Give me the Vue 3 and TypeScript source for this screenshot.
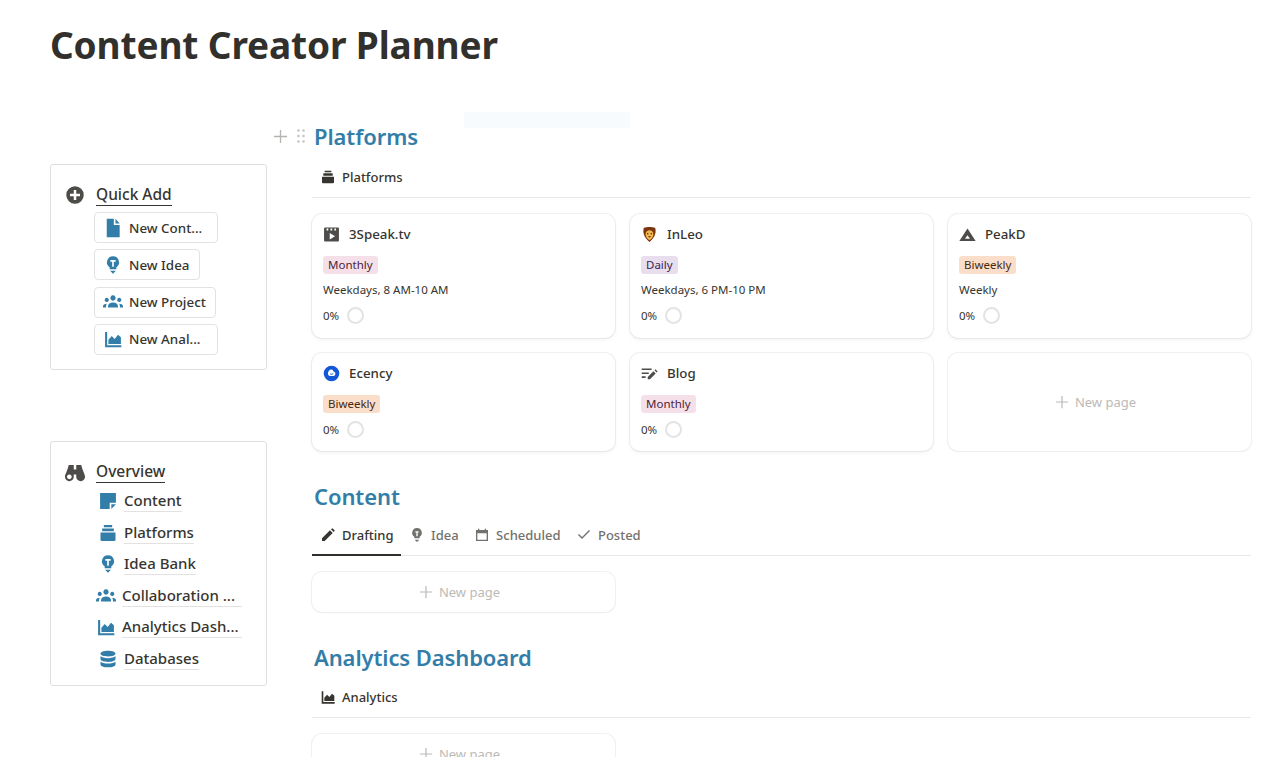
<script setup lang="ts">
const icons: Record<string, string> = {
  plus: 'M12 1.500a10.500 10.500 0 1 0 0 21a10.500 10.500 0 1 0 0-21zM10.500 6h3v4.500h4.500v3h-4.500v4.500h-3v-4.500h-4.500v-3h4.500z',
  file: 'M4.500 1h8.500v7.500h7V23H4.500zM15 1l5 5.500h-5z',
  bulb: 'M12 1.500a7.200 7.200 0 0 0-4 13.200V17h8v-2.300a7.200 7.200 0 0 0-4-13.200zM8.800 6h6.400v2h-2.200v6h-2V8H8.800zM8.500 19h7L12 22.500z',
  groups: 'M12 4a3.200 3.200 0 1 0 .01 0zM4.500 7a2.500 2.500 0 1 0 .01 0zM19.500 7a2.500 2.500 0 1 0 .01 0zM6 18.500V17c0-2.500 2.500-4.500 6-4.500s6 2 6 4.500v1.500zM0 18.500V17c0-1.700 1.700-3 4.500-3-.5 1-.8 2-.8 3v1.500zM24 18.500V17c0-1.700-1.700-3-4.500-3 .5 1 .8 2 .8 3v1.500z',
  chart: 'M2.500 3.500H5v16h17v2.500H2.500zM6.500 18v-5l4-4.500 3.500 3.500 4-5 3.500 3v8z',
  binoculars: 'M4.500 3.500h6V18a5.200 5.200 0 1 1-10.500-.5c0-3 2.500-6 4.500-14zM5.200 15a2.800 2.800 0 1 0 .01 0zM19.500 3.500h-6V18a5.200 5.200 0 1 0 10.500-.5c0-3-2.500-6-4.500-14zM18.800 15a2.800 2.800 0 1 0 .01 0zM10.500 9h3v6h-3z',
  note: 'M2.500 2.500h19V14H14v7.500H2.500zM16 16h5.500L16 21.500z',
  stack: 'M7 2.500h10v2.500H7zM5 6.500h14V10H5zM3 11.500h18V20a1.500 1.500 0 0 1-1.500 1.500h-15A1.500 1.500 0 0 1 3 20z',
  database: 'M12 2c5 0 9 1.300 9 3.500S17 9 12 9 3 7.700 3 5.500 7 2 12 2zM3 8.500c1.500 1.700 5 2.500 9 2.500s7.500-.8 9-2.500V12c0 2-4 3.500-9 3.500S3 14 3 12zM3 15c1.500 1.700 5 2.500 9 2.500s7.500-.8 9-2.500v3.500c0 2-4 3.500-9 3.500s-9-1.500-9-3.500z',
  video: 'M3 2h18a1.500 1.500 0 0 1 1.500 1.500v17a1.500 1.500 0 0 1-1.500 1.500H3a1.500 1.500 0 0 1-1.500-1.500v-17A1.500 1.500 0 0 1 3 2zM5 3.500v3h2.500v-3zM10.500 3.500v3H13v-3zM16 3.500v3h2.500v-3zM9.500 10v9l7.500-4.500z',
  peak: 'M12 3.500L23.500 21H.5zM12 13l-3.500 5h7z',
  blog: 'M1 5h14v2.200H1zM1 10.500h10v2.200H1zM1 16h5.500v2.200H1zM9.500 20v-3.200l8-8 3.200 3.200-8 8zM19 7.500l1.500-1.500 3 3-1.500 1.500z',
  pencil: 'M3 21v-4L15 5l4 4L7 21zM16.500 3.500l1-1a1.400 1.400 0 0 1 2 0l2 2a1.400 1.400 0 0 1 0 2l-1 1z',
  calendar: 'M3 4.500h3V2.500h2v2h8v-2h2v2h3V21H3zM5 9.500V19h14V9.500z',
  check: 'M9 18L3 12l1.500-1.500L9 15 19.500 4.500 21 6z',
  bulbGrey: 'M12 1.500a7.200 7.200 0 0 0-4 13.200V17h8v-2.300a7.200 7.200 0 0 0-4-13.200zM9.500 6.500h5v1.800h-1.500V14h-2V8.300H9.500zM8.500 19h7L12 22.500z',
}

const quick = [
  { icon: 'file', label: 'New Cont...', w: 124 },
  { icon: 'bulb', label: 'New Idea', w: 106 },
  { icon: 'groups', label: 'New Project', w: 122 },
  { icon: 'chart', label: 'New Anal...', w: 124 },
]
const links = [
  { icon: 'note', label: 'Content', wide: false },
  { icon: 'stack', label: 'Platforms', wide: false },
  { icon: 'bulb', label: 'Idea Bank', wide: false },
  { icon: 'groups', label: 'Collaboration ...', wide: true },
  { icon: 'chart', label: 'Analytics Dash...', wide: true },
  { icon: 'database', label: 'Databases', wide: false },
]
const platformCards = [
  { icon: 'video', name: '3Speak.tv', tag: 'Monthly', cls: 'pink', note: 'Weekdays, 8 AM-10 AM' },
  { icon: 'lion', name: 'InLeo', tag: 'Daily', cls: 'purple', note: 'Weekdays, 6 PM-10 PM' },
  { icon: 'peak', name: 'PeakD', tag: 'Biweekly', cls: 'orange', note: 'Weekly' },
  { icon: 'ecency', name: 'Ecency', tag: 'Biweekly', cls: 'orange', note: '' },
  { icon: 'blog', name: 'Blog', tag: 'Monthly', cls: 'pink', note: '' },
]
const tabs = [
  { icon: 'pencil', label: 'Drafting', active: true },
  { icon: 'bulbGrey', label: 'Idea', active: false },
  { icon: 'calendar', label: 'Scheduled', active: false },
  { icon: 'check', label: 'Posted', active: false },
]
</script>

<template>
  <div class="page">
    <h1 class="title">Content Creator Planner</h1>
    <div class="columns">
      <aside class="side">
        <section class="box quick">
          <div class="box-head">
            <svg class="head-icon" viewBox="0 0 24 24"><path :d="icons.plus" /></svg>
            <span class="head-link">Quick Add</span>
          </div>
          <div class="quick-list">
            <div v-for="q in quick" :key="q.label" class="quick-btn" :style="{ width: q.w + 'px' }">
              <svg class="blue-icon" viewBox="0 0 24 24"><path :d="icons[q.icon]" /></svg>
              <span>{{ q.label }}</span>
            </div>
          </div>
        </section>
        <section class="box overview">
          <div class="box-head">
            <svg class="head-icon" viewBox="0 0 24 24"><path :d="icons.binoculars" /></svg>
            <span class="head-link">Overview</span>
          </div>
          <div class="link-list">
            <div v-for="l in links" :key="l.label" class="link-row" :class="{ wide: l.wide }">
              <svg class="blue-icon" viewBox="0 0 24 24"><path :d="icons[l.icon]" /></svg>
              <span class="link-text">{{ l.label }}</span>
            </div>
          </div>
        </section>
      </aside>

      <main class="main">
        <div class="block-wrap">
          <div class="faint"></div>
          <div class="handles">
            <svg class="handle-plus" viewBox="0 0 16 16"><path d="M7.300 1h1.400v6.300H15v1.400H8.700V15H7.300V8.700H1V7.300h6.300z" /></svg>
            <svg class="handle-drag" viewBox="0 0 10 16"><circle cx="2.500" cy="2.500" r="1.300" /><circle cx="7.500" cy="2.500" r="1.300" /><circle cx="2.500" cy="8" r="1.300" /><circle cx="7.500" cy="8" r="1.300" /><circle cx="2.500" cy="13.500" r="1.300" /><circle cx="7.500" cy="13.500" r="1.300" /></svg>
          </div>
          <h2 class="section-title">Platforms</h2>
        </div>
        <div class="tabbar">
          <div class="tab plain">
            <svg class="tab-icon" viewBox="0 0 24 24"><path :d="icons.stack" /></svg>
            <span>Platforms</span>
          </div>
        </div>
        <div class="card-grid">
          <article v-for="c in platformCards" :key="c.name" class="card">
            <div class="card-title">
              <svg v-if="c.icon === 'lion'" class="card-icon" viewBox="0 0 24 24">
                <path d="M12 1.500c3 0 5 .5 8 1 1.500 5 1 13-8 20-9-7-9.500-15-8-20 3-.5 5-1 8-1z" fill="#7a3410" />
                <path d="M12 6c3 0 5.500 2 5.500 5.500 0 4-3 7-5.500 8.500-2.500-1.500-5.500-4.500-5.500-8.500C6.500 8 9 6 12 6z" fill="#f2b84b" />
                <circle cx="9.500" cy="11" r="1" fill="#3a1c08" /><circle cx="14.500" cy="11" r="1" fill="#3a1c08" />
                <path d="M10 14h4l-2 2.500z" fill="#7a3410" />
              </svg>
              <svg v-else-if="c.icon === 'ecency'" class="card-icon" viewBox="0 0 24 24">
                <circle cx="12" cy="12" r="11" fill="#1157d6" />
                <path d="M7 12c0-3 2.200-5.500 4.700-5.500 1.800 0 2.800 1.200 3.100 2.800 1.500.2 2.700 1.300 2.700 2.900 0 2-1.600 3.300-3.500 3.300H10c-1.800 0-3-1.500-3-3.500z" fill="#fff" />
                <path d="M10 12.500c1.500.8 3.500.6 4.500-.5" fill="none" stroke="#1157d6" stroke-width="1.400" />
              </svg>
              <svg v-else class="card-icon dark" viewBox="0 0 24 24"><path :d="icons[c.icon]" /></svg>
              <span>{{ c.name }}</span>
            </div>
            <div class="tag-row"><span class="tag" :class="c.cls">{{ c.tag }}</span></div>
            <div v-if="c.note" class="note">{{ c.note }}</div>
            <div class="progress"><span>0%</span><i class="ring"></i></div>
          </article>
          <div class="card new-card"><svg class="plus-small" viewBox="0 0 16 16"><path d="M7.300 1h1.400v6.300H15v1.400H8.700V15H7.300V8.700H1V7.300h6.300z" /></svg><span>New page</span></div>
        </div>

        <h2 class="section-title content-title">Content</h2>
        <div class="tabbar tight">
          <div v-for="t in tabs" :key="t.label" class="tab" :class="{ active: t.active }">
            <svg class="tab-icon" viewBox="0 0 24 24"><path :d="icons[t.icon]" /></svg>
            <span>{{ t.label }}</span>
          </div>
        </div>
        <div class="single-grid">
          <div class="card new-card short"><svg class="plus-small" viewBox="0 0 16 16"><path d="M7.300 1h1.400v6.300H15v1.400H8.700V15H7.300V8.700H1V7.300h6.300z" /></svg><span>New page</span></div>
        </div>

        <h2 class="section-title analytics-title">Analytics Dashboard</h2>
        <div class="tabbar mid">
          <div class="tab plain">
            <svg class="tab-icon" viewBox="0 0 24 24"><path :d="icons.chart" /></svg>
            <span>Analytics</span>
          </div>
        </div>
        <div class="single-grid">
          <div class="card new-card short"><svg class="plus-small" viewBox="0 0 16 16"><path d="M7.300 1h1.400v6.300H15v1.400H8.700V15H7.300V8.700H1V7.300h6.300z" /></svg><span>New page</span></div>
        </div>
      </main>
    </div>
  </div>
</template>

<style>
html, body { margin: 0; background: #fff; overflow: hidden; }
</style>

<style scoped>
.page {
  height: 757px;
  overflow: hidden;
  box-sizing: border-box;
  padding: 0 29px 0 50px;
  font-family: "Noto Sans", "Open Sans", sans-serif;
  color: #37352f;
  background: #fff;
}
.title {
  margin: 0;
  padding-top: 18px;
  height: 54px;
  font-size: 37px;
  line-height: 54px;
  font-weight: 700;
  letter-spacing: -0.13px;
  color: #32302c;
}
.columns { display: flex; gap: 45px; padding-top: 47px; }
.side { width: 217px; flex: none; padding-top: 45px; display: flex; flex-direction: column; gap: 71px; }
.box {
  border: 1px solid #dfdfde;
  border-radius: 3px;
  box-sizing: border-box;
}
.quick { height: 206px; padding: 18px 0 0 14px; }
.overview { height: 245px; padding: 18px 0 0 14px; }
.box-head { display: flex; align-items: center; gap: 11px; height: 24px; }
.head-icon { width: 20px; height: 20px; fill: #4d4c48; flex: none; }
.head-link {
  font-size: 15.500px;
  font-weight: 500;
  line-height: 21px;
  border-bottom: 1.500px solid #37352f;
}
.quick-list { display: flex; flex-direction: column; gap: 6.300px; margin: 5px 0 0 29px; }
.quick-btn {
  height: 31px;
  box-sizing: border-box;
  border: 1px solid #e3e2e0;
  border-radius: 4px;
  display: flex;
  align-items: center;
  gap: 6px;
  padding-left: 8px;
  font-size: 13.400px;
  font-weight: 500;
  white-space: nowrap;
}
.blue-icon { width: 20px; height: 20px; fill: #337ea9; flex: none; }
.link-list { display: flex; flex-direction: column; gap: 7.500px; margin: 5px 0 0 33px; }
.link-row { display: flex; align-items: center; height: 24px; gap: 6px; font-size: 15px; font-weight: 500; white-space: nowrap; }
.link-row.wide { margin-left: -2px; }
.link-text { border-bottom: 1px solid #e3e2e0; line-height: 21px; }
.link-row.wide .link-text { width: 120px; }
.main { width: 939px; flex: none; }
.block-wrap { position: relative; }
.faint {
  position: absolute;
  left: 152px;
  top: -6px;
  width: 166px;
  height: 16px;
  background: #f8fbfe;
  border-radius: 3px;
}
.handles { position: absolute; left: -39px; top: 10px; display: flex; align-items: center; gap: 8px; }
.handle-plus { width: 15px; height: 15px; fill: #b4b4b0; }
.handle-drag { width: 10px; height: 16px; fill: #c6c6c2; }
.section-title {
  margin: -1px 0 1px 2px;
  font-size: 22px;
  line-height: 36px;
  font-weight: 600;
  letter-spacing: -0.1px;
  color: #337ea9;
  position: relative;
}
.tabbar {
  display: flex;
  height: 43px;
  box-sizing: border-box;
  border-bottom: 1px solid #e8e8e6;
}
.tabbar.tight { margin-top: -2px; }
.tabbar.mid { margin-top: -1px; }
.tab {
  display: flex;
  align-items: center;
  gap: 6px;
  padding: 0 7.500px 0 8px;
  font-size: 13px;
  font-weight: 500;
  color: #73716d;
  position: relative;
  height: 43px;
  box-sizing: border-box;
}
.tab.plain, .tab.active { color: #37352f; }
.tab.active::after {
  content: "";
  position: absolute;
  left: 0;
  right: 0;
  bottom: 0;
  height: 2px;
  background: #2f2e2a;
}
.tab-icon { width: 16px; height: 16px; fill: currentColor; flex: none; }
.card-grid {
  display: grid;
  grid-template-columns: repeat(3, 303px);
  grid-template-rows: 124px 98px;
  gap: 15px;
  margin-top: 16px;
}
.card {
  border-radius: 10px;
  box-shadow: 0 0 0 1px rgba(15, 15, 15, 0.06), 0 2px 4px rgba(15, 15, 15, 0.05);
  padding: 9px 11px 0;
  box-sizing: border-box;
  background: #fff;
}
.card-title {
  display: flex;
  align-items: center;
  gap: 9px;
  height: 22px;
  font-size: 13.300px;
  font-weight: 500;
}
.card-icon { width: 17px; height: 17px; flex: none; }
.card-icon.dark { fill: #4d4c48; }
.tag-row { margin-top: 11px; height: 18px; display: flex; }
.tag {
  display: block;
  height: 18px;
  line-height: 18px;
  padding: 0 5px;
  border-radius: 3px;
  font-size: 11.500px;
}
.pink { background: #f5e0e9; color: #4c2337; }
.purple { background: #e8deee; color: #412454; }
.orange { background: #fadec9; color: #49290e; }
.note { margin-top: 7px; font-size: 11.500px; line-height: 17px; }
.progress { display: flex; align-items: center; gap: 8px; height: 22px; margin-top: 6px; font-size: 11.500px; }
.tag-row + .progress { margin-top: 5px; }
.ring { display: block; width: 17px; height: 17px; box-sizing: border-box; border: 2.500px solid #e3e3e1; border-radius: 50%; }
.new-card {
  display: flex;
  align-items: center;
  justify-content: center;
  gap: 6px;
  padding: 0 8px 0 0;
  font-size: 13px;
  color: #bbbab6;
  box-shadow: 0 0 0 1px rgba(15, 15, 15, 0.055), 0 1px 3px rgba(15, 15, 15, 0.03);
}
.plus-small { width: 14px; height: 14px; fill: #bbbab6; }
.content-title { margin-top: 27px; }
.analytics-title { margin-top: 27px; }
.single-grid { margin-top: 16px; width: 303px; }
.short { height: 40px; }
</style>
